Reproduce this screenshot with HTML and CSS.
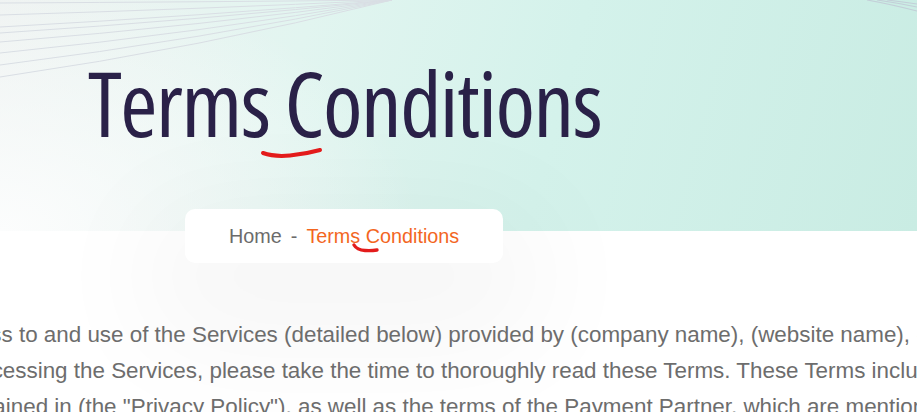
FILE: index.html
```html
<!DOCTYPE html>
<html lang="en">
<head>
<meta charset="utf-8">
<title>Terms Conditions</title>
<link rel="stylesheet" href="styles.css">
</head>
<body>
<div class="page">
  <header class="hero">
    <svg class="hero-lines" width="400" height="90" viewBox="0 0 400 90" fill="none" stroke="#d9dee4" stroke-width="1">
      <path d="M0 3 Q200 2 392 0"/>
      <path d="M0 15 Q200 9 392 0"/>
      <path d="M0 27 Q200 16 392 0"/>
      <path d="M0 33 Q200 20 392 0"/>
      <path d="M0 42 Q200 26 392 0"/>
      <path d="M0 53 Q200 33 392 0"/>
      <path d="M0 65 Q200 40 392 0"/>
      <path d="M0 77 Q200 48 392 0"/>
    </svg>
    <svg class="corner-lines" width="56" height="16" viewBox="0 0 56 16" fill="none" stroke="#c3cfd8" stroke-width="1.2">
      <path d="M6 0 Q28 4 56 11"/>
      <path d="M16 0 Q36 3 56 7"/>
      <path d="M26 0 Q42 2 56 4"/>
    </svg>
    <h1 class="title">Terms Conditions</h1>
  </header>

  <nav class="crumb-wrap">
    <div class="crumb">
      <span class="crumb-home">Home</span>
      <span class="crumb-sep">-</span>
      <span class="crumb-current">Terms Conditions</span>
    </div>
  </nav>

  <main class="content">
    <p class="terms">
      <span class="ln l1">access to and use of the Services (detailed below) provided by (company name), (website name), ("Company", "we", "us" or "our").</span>
      <span class="ln l2">accessing the Services, please take the time to thoroughly read these Terms. These Terms include our Privacy Policy</span>
      <span class="ln l3">contained in (the "Privacy Policy"), as well as the terms of the Payment Partner, which are mentioned below.</span>
    </p>
  </main>

  <svg class="mark mark-title" width="64" height="14" viewBox="0 0 64 14" fill="none">
    <path d="M3 7 Q14 11 30 9.5 Q46 8 60 4" stroke="#e31b1b" stroke-width="4" stroke-linecap="round"/>
  </svg>
  <svg class="mark mark-crumb" width="30" height="12" viewBox="0 0 30 12" fill="none">
    <path d="M3 3 Q6 8 14 8.5 Q20 9 26 8" stroke="#e31b1b" stroke-width="3.4" stroke-linecap="round"/>
  </svg>
</div>
</body>
</html>
```
FILE: styles.css
```css
html, body {
  margin: 0;
  padding: 0;
  background: #ffffff;
}

.page {
  position: relative;
  width: 917px;
  height: 412px;
  overflow: hidden;
  font-family: "Liberation Sans", Arial, sans-serif;
}

.hero {
  position: relative;
  height: 231px;
  box-sizing: border-box;
  padding: 57px 0 0 88px;
  background:
    radial-gradient(ellipse 420px 260px at 0% 100%, rgba(252, 253, 253, 1) 0%, rgba(252, 253, 253, 0) 100%),
    linear-gradient(105deg, #eef2f1 0%, #e2f5f0 32%, #d4f2eb 60%, #c9ece3 100%);
}

.hero-lines {
  position: absolute;
  left: 0;
  top: 0;
}

.corner-lines {
  position: absolute;
  right: 0;
  top: 0;
}

.title {
  position: relative;
  margin: 0;
  font-family: "Open Sans", sans-serif;
  font-stretch: 75%;
  font-weight: 400;
  font-size: 90px;
  line-height: 90px;
  letter-spacing: -1.5px;
  color: #2a2148;
  white-space: nowrap;
}

.crumb-wrap {
  display: flex;
  margin-top: -22px;
  padding-left: 185px;
  position: relative;
}

.crumb {
  display: flex;
  align-items: center;
  gap: 9px;
  height: 54px;
  padding: 0 44px;
  background: #ffffff;
  border-radius: 10px;
  box-shadow: 0 40px 120px 40px rgba(0, 0, 0, 0.04);
  font-size: 19.8px;
  white-space: nowrap;
}

.crumb-home {
  color: #6b6b6b;
}

.crumb-sep {
  color: #6b6b6b;
}

.crumb-current {
  color: #f3661f;
}

.content {
  position: relative;
  margin-top: 54px;
  overflow: hidden;
}

.terms {
  margin: 0;
  font-size: 22.4px;
  line-height: 35.84px;
  color: #6d6d6d;
}

.ln {
  display: block;
  white-space: nowrap;
}

.l1 { margin-left: -57px; }
.l2 { margin-left: -32px; }
.l3 { margin-left: -49px; }

.mark {
  position: absolute;
}

.mark-title {
  left: 260px;
  top: 146px;
}

.mark-crumb {
  left: 351px;
  top: 242px;
}
```
